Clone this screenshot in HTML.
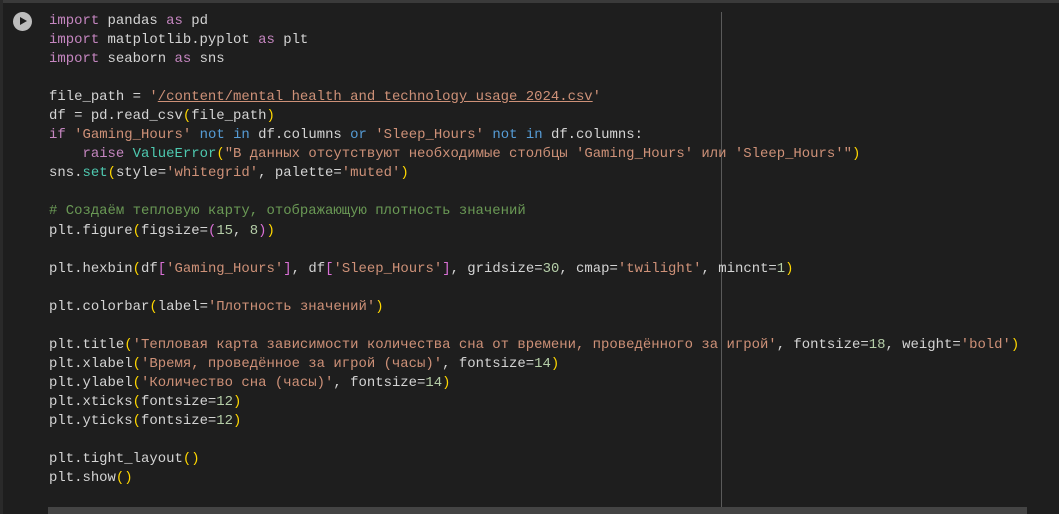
<!DOCTYPE html>
<html><head><meta charset="utf-8"><style>
html,body{margin:0;padding:0;width:1059px;height:514px;overflow:hidden;background:#1e1e1e;}
.top{position:absolute;left:0;top:0;width:1059px;height:3px;background:#3a3a3a;}
.left{position:absolute;left:0;top:0;width:3px;height:514px;background:#2a2a2a;}
.ruler{position:absolute;left:721px;top:12px;width:1px;height:502px;background:#5a5a5a;}
.scroll{position:absolute;left:48px;top:507px;width:979px;height:7px;background:#444;}
.play{position:absolute;left:13px;top:12px;width:19px;height:19px;border-radius:50%;background:#bdbdbd;}
.play:after{content:"";position:absolute;left:7px;top:5px;border-left:7px solid #1e1e1e;border-top:4.5px solid transparent;border-bottom:4.5px solid transparent;}
pre{position:absolute;left:49px;top:12px;margin:0;font-family:"Liberation Mono","Noto Sans CJK SC",monospace;font-size:13.95px;line-height:19.05px;color:#d4d4d4;}
.k{color:#c586c0}.s{color:#ce9178}.u{color:#ce9178;text-decoration:underline}.c{color:#4ec9b0}.b{color:#569cd6}.m{color:#6a9955}.n{color:#b5cea8}.y{color:#ffd700}.p{color:#da70d6}
</style></head><body>
<div class="top"></div><div class="left"></div>
<div class="ruler"></div>
<div class="play"></div>
<pre><span class="k">import</span> pandas <span class="k">as</span> pd
<span class="k">import</span> matplotlib.pyplot <span class="k">as</span> plt
<span class="k">import</span> seaborn <span class="k">as</span> sns

file_path = <span class="s">'</span><span class="u">/content/mental_health_and_technology_usage_2024.csv</span><span class="s">'</span>
df = pd.read_csv<span class="y">(</span>file_path<span class="y">)</span>
<span class="k">if</span> <span class="s">'Gaming_Hours'</span> <span class="b">not</span> <span class="b">in</span> df.columns <span class="b">or</span> <span class="s">'Sleep_Hours'</span> <span class="b">not</span> <span class="b">in</span> df.columns:
    <span class="k">raise</span> <span class="c">ValueError</span><span class="y">(</span><span class="s">"В данных отсутствуют необходимые столбцы 'Gaming_Hours' или 'Sleep_Hours'"</span><span class="y">)</span>
sns.<span class="c">set</span><span class="y">(</span>style=<span class="s">'whitegrid'</span>, palette=<span class="s">'muted'</span><span class="y">)</span>

<span class="m"># Создаём тепловую карту, отображающую плотность значений</span>
plt.figure<span class="y">(</span>figsize=<span class="p">(</span><span class="n">15</span>, <span class="n">8</span><span class="p">)</span><span class="y">)</span>

plt.hexbin<span class="y">(</span>df<span class="p">[</span><span class="s">'Gaming_Hours'</span><span class="p">]</span>, df<span class="p">[</span><span class="s">'Sleep_Hours'</span><span class="p">]</span>, gridsize=<span class="n">30</span>, cmap=<span class="s">'twilight'</span>, mincnt=<span class="n">1</span><span class="y">)</span>

plt.colorbar<span class="y">(</span>label=<span class="s">'Плотность значений'</span><span class="y">)</span>

plt.title<span class="y">(</span><span class="s">'Тепловая карта зависимости количества сна от времени, проведённого за игрой'</span>, fontsize=<span class="n">18</span>, weight=<span class="s">'bold'</span><span class="y">)</span>
plt.xlabel<span class="y">(</span><span class="s">'Время, проведённое за игрой (часы)'</span>, fontsize=<span class="n">14</span><span class="y">)</span>
plt.ylabel<span class="y">(</span><span class="s">'Количество сна (часы)'</span>, fontsize=<span class="n">14</span><span class="y">)</span>
plt.xticks<span class="y">(</span>fontsize=<span class="n">12</span><span class="y">)</span>
plt.yticks<span class="y">(</span>fontsize=<span class="n">12</span><span class="y">)</span>

plt.tight_layout<span class="y">()</span>
plt.show<span class="y">()</span></pre>
<div class="scroll"></div>
</body></html>
